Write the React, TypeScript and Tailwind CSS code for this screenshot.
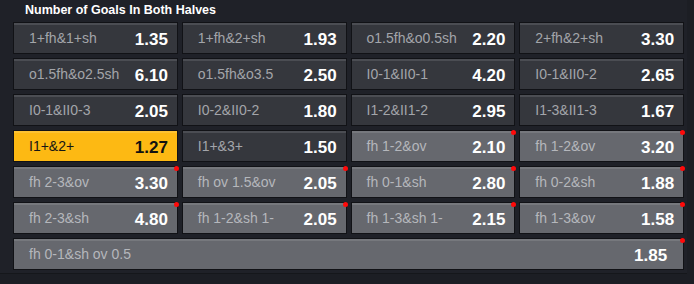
type Cell = {
  label: string
  odds: string
  tone?: 'dark' | 'light' | 'active'
  wide?: boolean
}

const cells: Cell[] = [
  { label: '1+fh&1+sh', odds: '1.35' },
  { label: '1+fh&2+sh', odds: '1.93' },
  { label: 'o1.5fh&o0.5sh', odds: '2.20' },
  { label: '2+fh&2+sh', odds: '3.30' },
  { label: 'o1.5fh&o2.5sh', odds: '6.10' },
  { label: 'o1.5fh&o3.5', odds: '2.50' },
  { label: 'I0-1&II0-1', odds: '4.20' },
  { label: 'I0-1&II0-2', odds: '2.65' },
  { label: 'I0-1&II0-3', odds: '2.05' },
  { label: 'I0-2&II0-2', odds: '1.80' },
  { label: 'I1-2&II1-2', odds: '2.95' },
  { label: 'I1-3&II1-3', odds: '1.67' },
  { label: 'I1+&2+', odds: '1.27', tone: 'active' },
  { label: 'I1+&3+', odds: '1.50' },
  { label: 'fh 1-2&ov', odds: '2.10', tone: 'light' },
  { label: 'fh 1-2&ov', odds: '3.20', tone: 'light' },
  { label: 'fh 2-3&ov', odds: '3.30', tone: 'light' },
  { label: 'fh ov 1.5&ov', odds: '2.05', tone: 'light' },
  { label: 'fh 0-1&sh', odds: '2.80', tone: 'light' },
  { label: 'fh 0-2&sh', odds: '1.88', tone: 'light' },
  { label: 'fh 2-3&sh', odds: '4.80', tone: 'light' },
  { label: 'fh 1-2&sh 1-', odds: '2.05', tone: 'light' },
  { label: 'fh 1-3&sh 1-', odds: '2.15', tone: 'light' },
  { label: 'fh 1-3&ov', odds: '1.58', tone: 'light' },
  { label: 'fh 0-1&sh ov 0.5', odds: '1.85', tone: 'light', wide: true },
]

const OddsCell = ({ label, odds, tone = 'dark', wide }: Cell) => {
  const bg =
    tone === 'active'
      ? 'bg-[#fdb913] shadow-[inset_0_2px_0_#fdc232]'
      : tone === 'light'
        ? 'bg-[#66686e] shadow-[inset_0_2px_0_#76787d]'
        : 'bg-[#35373d] shadow-[inset_0_2px_0_#4b4d53]'
  const labelColor = tone === 'active' ? 'text-[#151515]' : tone === 'light' ? 'text-[#b5b7bc]' : 'text-[#a3a5aa]'
  const oddsColor = tone === 'active' ? 'text-[#111111]' : 'text-white'

  return (
    <div
      className={`relative flex h-[32px] items-center border border-[#111216] pl-[15px] ${bg} ${
        wide ? 'col-span-4' : ''
      }`}
    >
      <span className={`flex-1 whitespace-nowrap text-[14px] leading-[16px] ${labelColor}`}>{label}</span>
      <span
        className={`shrink-0 pt-[4px] text-left text-[17px] font-bold leading-[20px] ${oddsColor} ${
          wide ? 'w-[49px]' : 'w-[42px]'
        }`}
      >
        {odds}
      </span>
      {tone === 'light' && (
        <span className="absolute -right-[2px] -top-[1px] h-[5px] w-[5px] rounded-full bg-[#ff0a0a]" />
      )}
    </div>
  )
}

export default function App() {
  return (
    <div className="h-[284px] w-[694px] bg-[#1c1e24]" style={{ fontFamily: '"Liberation Sans", Arial, sans-serif' }}>
      <div className="w-[687px] border-b border-[#15171b] bg-[#1f2128] pb-[3px] pl-[13px] pr-[3px]">
        <div className="h-[22px] pl-[12px] pt-[2px] text-[12.5px] font-bold leading-[16px] text-white">
          Number of Goals In Both Halves
        </div>
        <div className="grid grid-cols-4 gap-[4px]">
          {cells.map((c, i) => (
            <OddsCell key={i} {...c} />
          ))}
        </div>
      </div>
    </div>
  )
}
